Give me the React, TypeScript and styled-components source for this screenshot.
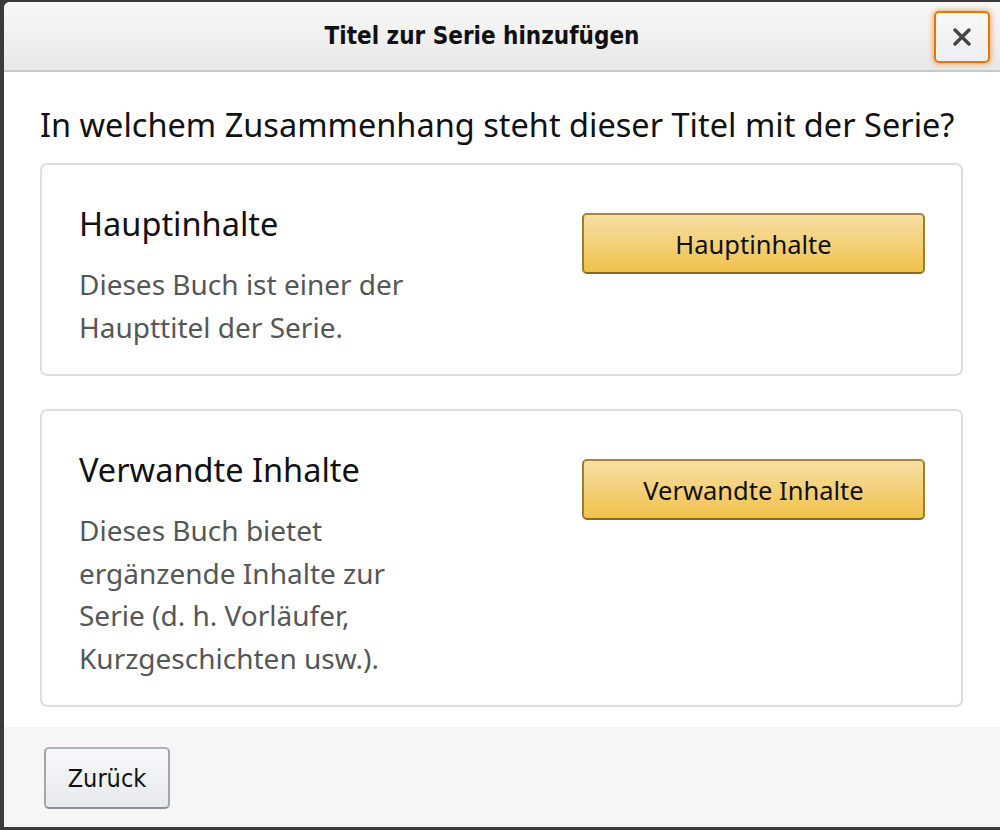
import React from "react";
import styled, { createGlobalStyle } from "styled-components";

const GlobalStyle = createGlobalStyle`
  html, body {
    margin: 0;
    padding: 0;
    height: 100%;
    background: #3a3a3a;
  }
  #root {
    height: 100%;
  }
  * {
    box-sizing: border-box;
  }
`;

const Page = styled.div`
  height: 830px;
  padding: 2px 0 3px 4px;
  display: flex;
`;

const Dialog = styled.div`
  flex: 1;
  display: flex;
  flex-direction: column;
  background: #fff;
  border-radius: 6px 0 0 0;
  overflow: hidden;
`;

const Header = styled.div`
  height: 70px;
  flex-shrink: 0;
  position: relative;
  display: flex;
  align-items: center;
  justify-content: center;
  padding-right: 40px;
  background: linear-gradient(to bottom, #f8f8f8, #e8e8e8);
  border-bottom: 2px solid #c8c8c8;
`;

const HeaderTitle = styled.h1`
  margin: 0;
  font-family: "Liberation Sans Narrow", "DejaVu Sans Condensed", "Liberation Sans", sans-serif;
  font-stretch: condensed;
  font-weight: 700;
  font-size: 24px;
  color: #111;
`;

const CloseButton = styled.button`
  position: absolute;
  right: 10px;
  top: 9px;
  width: 56px;
  height: 52px;
  border: 2px solid #e77600;
  border-radius: 5px;
  background: linear-gradient(to bottom, #f7f8fa, #eceef0);
  box-shadow: 0 0 4px 2px rgba(228, 121, 17, 0.45);
  display: flex;
  align-items: center;
  justify-content: center;
  padding: 0;
  cursor: pointer;
`;

const Body = styled.div`
  flex: 1;
  min-height: 0;
  padding: 33px 37px 0 36px;
  display: flex;
  flex-direction: column;
  gap: 33px;
`;

const Question = styled.h2`
  margin: 0 0 -15px;
  font-family: "Noto Sans", "Open Sans", sans-serif;
  font-weight: 400;
  font-size: 32.5px;
  line-height: 40px;
  color: #111;
  white-space: nowrap;
`;

const Card = styled.div`
  border: 2px solid #dddddd;
  border-radius: 7px;
  padding: 39px 36px 26px 37px;
  display: flex;
  justify-content: space-between;
  align-items: flex-start;
`;

const CardText = styled.div`
  width: 345px;
  font-family: "Noto Sans", "Open Sans", sans-serif;
`;

const CardTitle = styled.h3`
  margin: 0 0 19px;
  font-weight: 400;
  font-size: 32.5px;
  line-height: 40px;
  color: #111;
`;

const CardDesc = styled.p`
  margin: 0;
  font-size: 28px;
  line-height: 42.5px;
  color: #565656;
`;

const PrimaryButton = styled.button`
  margin-top: 9px;
  width: 343px;
  height: 61px;
  border: 2px solid #a88734;
  border-color: #a88734 #9c7e31 #846a29;
  border-radius: 5px;
  background: linear-gradient(to bottom, #f7dfa5, #f0c14b);
  font-family: "Noto Sans", "Open Sans", sans-serif;
  font-size: 25.5px;
  color: #111;
  cursor: pointer;
`;

const Footer = styled.div`
  height: 100px;
  flex-shrink: 0;
  background: #f6f6f6;
  padding: 20px 40px;
  display: flex;
  align-items: flex-start;
`;

const SecondaryButton = styled.button`
  width: 126px;
  height: 62px;
  border: 2px solid #adb1b8;
  border-color: #adb1b8 #a2a6ac #8d9096;
  border-radius: 5px;
  background: linear-gradient(to bottom, #f7f8fa, #e7e9ec);
  font-family: "Liberation Sans Narrow", "DejaVu Sans Condensed", "Liberation Sans", sans-serif;
  font-stretch: condensed;
  font-size: 25px;
  color: #111;
  cursor: pointer;
`;

const options = [
  {
    title: "Hauptinhalte",
    desc: "Dieses Buch ist einer der Haupttitel der Serie.",
  },
  {
    title: "Verwandte Inhalte",
    desc: "Dieses Buch bietet ergänzende Inhalte zur Serie (d. h. Vorläufer, Kurzgeschichten usw.).",
  },
];

const App: React.FC = () => {
  return (
    <>
      <GlobalStyle />
      <Page>
        <Dialog>
          <Header>
            <HeaderTitle>Titel zur Serie hinzufügen</HeaderTitle>
            <CloseButton aria-label="Schließen">
              <svg width="18" height="18" viewBox="0 0 18 18">
                <path
                  d="M2 2 L16 16 M16 2 L2 16"
                  stroke="#444"
                  strokeWidth="3.4"
                  strokeLinecap="round"
                />
              </svg>
            </CloseButton>
          </Header>
          <Body>
            <Question>In welchem Zusammenhang steht dieser Titel mit der Serie?</Question>
            {options.map((o) => (
              <Card key={o.title}>
                <CardText>
                  <CardTitle>{o.title}</CardTitle>
                  <CardDesc>{o.desc}</CardDesc>
                </CardText>
                <PrimaryButton>{o.title}</PrimaryButton>
              </Card>
            ))}
          </Body>
          <Footer>
            <SecondaryButton>Zurück</SecondaryButton>
          </Footer>
        </Dialog>
      </Page>
    </>
  );
};

export default App;
